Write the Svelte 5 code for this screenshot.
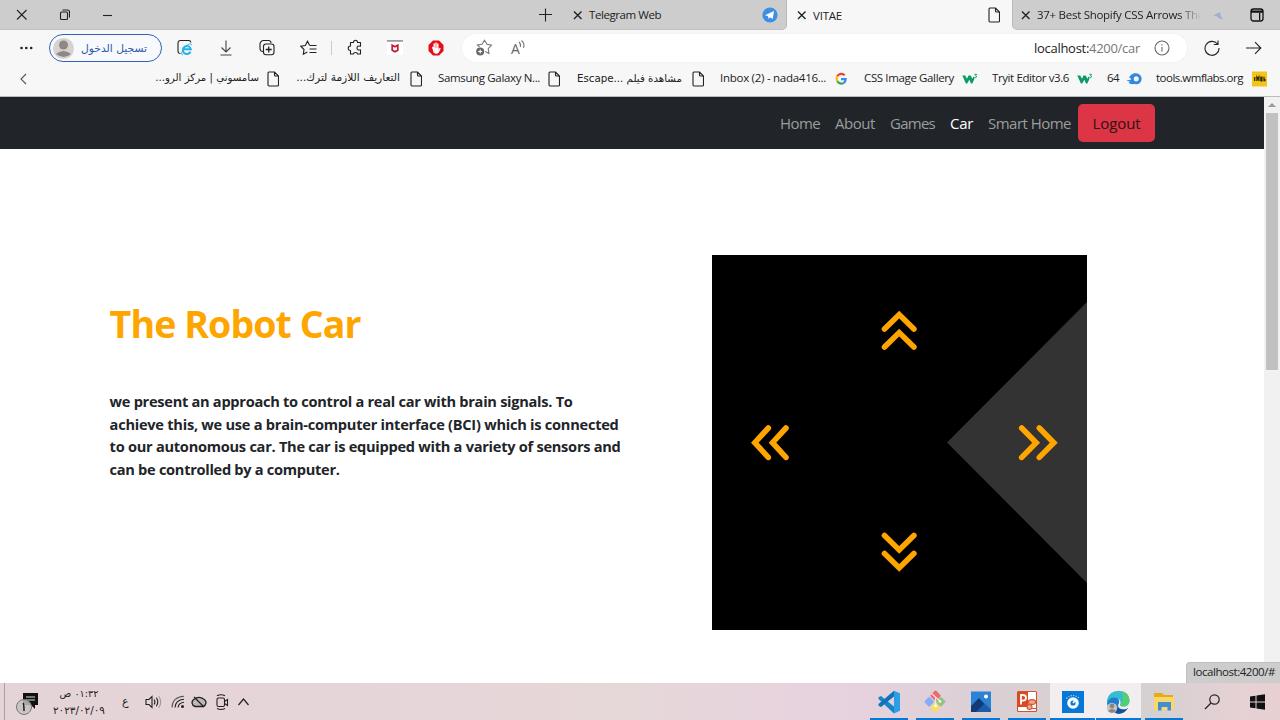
<script>
  // Letter-spacing (Latin) or font-size (joined scripts) is tuned so a label fills its slot.
  function fit(node, width) {
    const range = document.createRange();
    range.selectNodeContents(node);
    const natural = range.getBoundingClientRect().width;
    if (!natural || !width) return;
    if (/[\u0600-\u06ff]/.test(node.textContent)) {
      const size = parseFloat(getComputedStyle(node).fontSize);
      node.style.fontSize = (size * width) / natural + 'px';
    } else {
      node.style.letterSpacing = (width - natural) / node.textContent.length + 'px';
    }
  }

  const windowRow = [
    { icon: 'close', gap: 16, w: 11 },
    { icon: 'restore', gap: 32, w: 11 },
    { icon: 'minimise', gap: 32, w: 11 },
    { icon: 'plus', gap: 426, w: 13 },
    { icon: 'x', gap: 21, w: 9 },
    { text: 'Telegram Web', gap: 7, w: 72 },
    { icon: 'telegram', gap: 101, w: 16 }
  ];
  const toolbar = [
    { icon: 'download', gap: 26, w: 14 },
    { icon: 'collections', gap: 26, w: 16 },
    { icon: 'favourites', gap: 25, w: 17 },
    { icon: 'divider', gap: 14, w: 2 },
    { icon: 'puzzle', gap: 14, w: 15 },
    { icon: 'shield', gap: 25, w: 16 },
    { icon: 'hand', gap: 25, w: 16 }
  ];
  const bookmarks = [
    { icon: 'back', gap: 19, w: 8 },
    { text: 'سامسوني | مركز الرو...', gap: 128, w: 104, rtl: true },
    { icon: 'doc', gap: 8, w: 12 },
    { text: 'التعاريف اللازمة لترك...', gap: 17, w: 104, rtl: true },
    { icon: 'doc', gap: 10, w: 12 },
    { text: 'Samsung Galaxy N...', gap: 16, w: 102 },
    { icon: 'doc', gap: 8, w: 12 },
    { text: 'مشاهدة فيلم Escape...\u200e', gap: 17, w: 105, rtl: true },
    { icon: 'doc', gap: 10, w: 12 },
    { text: 'Inbox (2) - nada416...', gap: 16, w: 106 },
    { icon: 'google', gap: 9, w: 12 },
    { text: 'CSS Image Gallery', gap: 17, w: 90 },
    { icon: 'w3', gap: 8, w: 16 },
    { text: 'Tryit Editor v3.6', gap: 14, w: 77 },
    { icon: 'w3', gap: 8, w: 16 },
    { text: '64', gap: 14, w: 12 },
    { icon: 'comet', gap: 7, w: 16 },
    { text: 'tools.wmflabs.org', gap: 14, w: 87 },
    { icon: 'imdb', gap: 9, w: 15 }
  ];
  const links = [
    { text: 'Home', w: 40 },
    { text: 'About', w: 40 },
    { text: 'Games', w: 45 },
    { text: 'Car', w: 23, active: true },
    { text: 'Smart Home', w: 83 }
  ];
  const copy = [
    { text: 'we present an approach to control a real car with brain signals. To', w: 463 },
    { text: 'achieve this, we use a brain-computer interface (BCI) which is connected', w: 509 },
    { text: 'to our autonomous car. The car is equipped with a variety of sensors and', w: 511 },
    { text: 'can be controlled by a computer.', w: 230 }
  ];
  const tray = [
    { icon: 'speaker', gap: 17, w: 17 },
    { icon: 'wifi', gap: 9, w: 14 },
    { icon: 'cloud', gap: 5, w: 18 },
    { icon: 'camera', gap: 7, w: 14 },
    { icon: 'up', gap: 8, w: 13 }
  ];
  const apps = ['vscode', 'git', 'photos', 'powerpoint', 'disc', 'edge', 'folder'];
</script>

{#snippet icon(name, w)}
  <svg class="icon" width={w} height={w > 18 ? 24 : 18} viewBox="0 0 {w} {w > 18 ? 24 : 18}" fill="none" stroke="#222" stroke-width="1.1">
    {#if name === 'close'}
      <path d="M1 4l9.5 9.5M10.500 4L1 13.500" />
    {:else if name === 'restore'}
      <rect x="1.500" y="6" width="7" height="7.500" rx="1" /><path d="M3.500 4h5a2 2 0 0 1 2 2v5.500" />
    {:else if name === 'minimise'}
      <path d="M1 9.500h9" />
    {:else if name === 'plus'}
      <path d="M6.500 2.500v13M0 8.500h13" />
    {:else if name === 'x'}
      <path d="M1 5.500l7.500 7.500M8.500 5.500L1 13" stroke-width="1.400" />
    {:else if name === 'telegram'}
      <circle cx="8" cy="9" r="7.600" fill="#3c8fe3" stroke="none" /><path d="M3 9.200l9-4.200-1.300 8-2.700-1.700L6.700 13 6 10.300z" fill="#fff" stroke="none" />
    {:else if name === 'doc'}
      <path d="M1 3a1 1 0 0 1 1-1h5.500l4 4v9a1 1 0 0 1-1 1H2a1 1 0 0 1-1-1zM7.500 2v3a1 1 0 0 0 1 1h3" />
    {:else if name === 'bird'}
      <path d="M1 9.500L8 6l1.500 7L5.500 10.500z" fill="#a3b1c8" stroke="none" /><path d="M6 10.500l4.500 2.500" stroke="#8faad8" />
    {:else if name === 'tabs'}
      <rect x="1" y="3" width="12" height="12" rx="2.500" stroke="#111" stroke-width="1.300" /><path d="M1 4.500h12v2.300H1zM9 7h1.300v7H9z" fill="#111" stroke="none" />
    {:else if name === 'dots'}
      <g fill="#222" stroke="none"><circle cx="2.500" cy="9" r="1.300" /><circle cx="7.300" cy="9" r="1.300" /><circle cx="12.200" cy="9" r="1.300" /></g>
    {:else if name === 'ie'}
      <path d="M3.500 14.500A2.500 2.500 0 0 1 1 12V4a2.500 2.500 0 0 1 2.500-2.500h8A2.500 2.500 0 0 1 14 3.500" /><path d="M13.500 12.700A4 4 0 1 1 13.800 10.200H6.800" stroke="#22b4e8" stroke-width="2" /><path d="M6 15.600c-3 1-.8-5 2.500-8s6.500-4 5.700-1.200" stroke="#22b4e8" stroke-width=".9" />
    {:else if name === 'download'}
      <path d="M7 1.500v11M2.500 8.500L7 13l4.500-4.500M1.500 16h11" stroke="#444" />
    {:else if name === 'collections'}
      <path d="M4 12.500A3 3 0 0 1 1 10V5a3.500 3.500 0 0 1 3.500-3.500h5A2.500 2.500 0 0 1 12 4" /><rect x="4.500" y="5" width="10.500" height="10.800" rx="2.500" /><path d="M9.750 7.500v6M6.700 10.500h6" stroke-width="1.300" />
    {:else if name === 'favourites'}
      <path d="M9.700 6.500L7.500 2.200 5.300 6.500.8 7.200 4 10.500l-.7 4.800 4-2.200M10 6.500h6.500M9.500 10h7M9.500 13.500h7" />
    {:else if name === 'divider'}
      <path d="M.5 2v14" stroke="#ccc" />
    {:else if name === 'puzzle'}
      <path d="M3.500 3.500h3c0-3 4-3 4 0h3v3.700c-2.500-.7-3.500.4-3.500 1.800s1 2.500 3.500 1.800V15h-3c0-2-4-2-4 0h-3v-3.500c-3 0-3-4.500 0-4.500z" stroke-linejoin="round" />
    {:else if name === 'shield'}
      <rect y="1" width="16" height="15" fill="#fff" stroke="none" /><path d="M0 1.900h16" stroke="#9c9c9c" stroke-width="1.800" /><path d="M5.200 6.200l2.800 1.600 2.800-1.600v5L8 12.800l-2.800-1.600z" stroke="#c11b33" stroke-width="1.700" />
    {:else if name === 'hand'}
      <path d="M5 1.500h6l4.500 4.500v6L11 16.500H5L.5 12V6z" fill="#e20f1a" stroke="none" /><path d="M4.800 8.500L6.200 13q2.300 2 4 0L12 9.500M6.200 10V5M8 10V4M9.800 10V5" stroke="#fff" stroke-width="1.400" stroke-linecap="round" /><path d="M6 9h4.500v4.500H6.500z" fill="#fff" stroke="none" />
    {:else if name === 'staradd'}
      <path d="M3.500 8L1.500 6l4.500-.7L8.500 1.200 11 5.300l4.500.8-3.300 3.600.7 4.800-3.600-2" stroke="#777" /><circle cx="4.200" cy="12.500" r="4" fill="#666" stroke="none" /><path d="M4.200 10.500v4M2.200 12.500h4" stroke="#fff" />
    {:else if name === 'waves'}
      <path d="M9 3q2.200 2 1.300 5M11.500 1.500q3.500 3 2 7.500" stroke="#777" />
    {:else if name === 'info'}
      <circle cx="8" cy="9" r="7" stroke="#666" /><path d="M8 8v4.500M8 5.200v1.300" stroke="#666" />
    {:else if name === 'refresh'}
      <path d="M13.500 5A7 7 0 1 0 15 9M14 1.500V5.500h-4.200" />
    {:else if name === 'forward'}
      <path d="M0 9h14.500M9 3.200L14.800 9 9 14.800" />
    {:else if name === 'back'}
      <path d="M7 4L2 9l5 5" stroke="#555" />
    {:else if name === 'google'}
      <g stroke-width="2.200"><path d="M9.700 5.200A4.600 4.600 0 0 0 2.300 6.300" stroke="#e84335" /><path d="M2.300 6.300a5 5 0 0 0 0 5" stroke="#fbbc05" /><path d="M2.300 11.300a4.600 4.600 0 0 0 6.500 1.500" stroke="#34a853" /><path d="M8.800 12.800a4.500 4.500 0 0 0 1.900-3.700H6" stroke="#4285f4" /></g>
    {:else if name === 'w3'}
      <path d="M.3 5.500h2.900l1.800 3.200 1.500-3.200h2.200l1.600 3.200 1.100-2h.9v2.600L10.300 13.500H9L7.300 9.800 5.200 13.500H3.900z" fill="#0a9c62" stroke="none" /><path d="M12.300 4.300h2.400l-1.300 1.500q1.800.2.900 1.500-.8.800-1.900.1" stroke="#0a9c62" stroke-width=".9" />
    {:else if name === 'comet'}
      <circle cx="10.200" cy="8.800" r="4" stroke="#3389e0" stroke-width="2.900" /><path d="M3 7.500Q6 3 10 3.400L7.500 8.500Q5 8.800 3 7.500zM.3 9.800q4 .8 6.900-1L9 13.800Q4 15 2.500 12.200l2-.4Q1.500 11.500.3 9.800z" fill="#3389e0" stroke="none" />
    {:else if name === 'imdb'}
      <rect y="1.500" width="15" height="15" fill="#f3c51b" stroke="none" /><path d="M2.700 7v4M4.900 11V7l1 1.500L6.900 7v4M8.900 7.200v3.600h1v-3.600zM12 6.700v4h.9V9" stroke="#332a00" stroke-width="1.300" />
    {:else if name === 'speaker'}
      <path d="M1 6.500h3L7 3.500v11l-3-3H1z" /><path d="M9 6.500q2 2.500 0 5M11.300 4.800q3 4.200 0 8.400" /><path d="M13.700 3.300q4 5.700 0 11.400" stroke="#999" />
    {:else if name === 'wifi'}
      <g stroke="#555" stroke-width="1.100"><path d="M1 14.500Q1.500 4 13 3.300" /><path d="M4 14.500Q4.500 7 13 6.300M7 14.500Q7.500 10 13 9.300" stroke="#222" /></g><circle cx="11.500" cy="13.500" r="1.500" fill="#222" stroke="none" />
    {:else if name === 'cloud'}
      <path d="M5 13.500a4 4 0 0 1-1-7.300Q9 2.500 14 6.200a4 4 0 0 1-1 7.300z" fill="#bdb7b8" stroke-width="1.300" /><path d="M4 4l10 10" stroke-width="1.300" />
    {:else if name === 'camera'}
      <rect x="2" y="5" width="7.500" height="8.500" rx="1.500" /><path d="M9.500 8.500l3-2v6l-3-2M2 2.700q4-2 8 0M2 15.500q4 2 8 0" />
    {:else if name === 'up'}
      <path d="M1.500 12l5-6 5 6" stroke-width="1.200" />
    {:else if name === 'vscode'}
      <path d="M1.500 7.300L4 6l13 10.500V23.500L1.500 9z" fill="#1686cc" stroke="none" /><path d="M1.500 15.700L4 17 17 6.500V.8L1.500 14z" fill="#1073b5" stroke="none" /><path d="M17 .8L23 3.300v17.400l-6 2.800z" fill="#2a9fe5" stroke="none" />
    {:else if name === 'git'}
      <g stroke="none"><rect x="8.500" y="1.700" width="8" height="8" rx="1.500" transform="rotate(45 12.500 5.700)" fill="#ef6a6c" /><rect x="2.500" y="8" width="7.500" height="7.500" rx="1.500" transform="rotate(45 6.200 11.700)" fill="#86adf8" /><rect x="14" y="8" width="7.500" height="7.500" rx="1.500" transform="rotate(45 17.700 11.700)" fill="#93c47f" /><rect x="8.200" y="13.500" width="8" height="8" rx="1.500" transform="rotate(45 12.200 17.500)" fill="#f7da70" /></g><path d="M8.500 3.500l9 8M12.500 7.500v8" stroke="#f3e4e6" stroke-width="1.200" /><circle cx="12.500" cy="16" r="1.400" fill="#fff" stroke="none" /><circle cx="17" cy="11.500" r="1.300" fill="#fff" stroke="none" />
    {:else if name === 'photos'}
      <path d="M2 1.500h20V22H2z" fill="#2c83d6" stroke="none" /><path d="M2 16l8-8 12 13v1H2z" fill="#123a78" stroke="none" /><path d="M10 19l5.500-5.500L22 19.500V22H7z" fill="#1c5ca8" stroke="none" /><circle cx="17" cy="6.500" r="2" fill="#fff" stroke="none" />
    {:else if name === 'powerpoint'}
      <rect x="2.500" y="1.500" width="19" height="20" rx="1" fill="#fff" stroke="#d35230" /><path d="M2.500 2h10.500v15H2.500z" fill="#d84a20" stroke="none" /><path d="M6 14.500V5h2q3 0 3 2.800t-3 2.800H6" stroke="#fff" stroke-width="1.800" /><ellipse cx="17" cy="12" rx="3.600" ry="2.400" fill="#f4a78e" stroke="#d35230" /><circle cx="14.500" cy="17" r="2.500" fill="#f4a78e" stroke="#d35230" /><path d="M17 18.500h4" stroke="#d35230" />
    {:else if name === 'disc'}
      <path d="M1 1h22v22H1z" fill="#0878d8" stroke="none" /><circle cx="12" cy="13" r="4.200" stroke="#fff" stroke-width="3.200" /><path d="M12 13l3.500-4" stroke="#fff" stroke-width="1.800" /><path d="M5.500 8.500Q12 2.500 18.500 8.500" stroke="#cfe8ff" stroke-dasharray="1 1.500" />
    {:else if name === 'edge'}
      <g stroke="none"><path d="M1 10Q3 1 12.500.8 23.500 1.500 23.500 10.500q0 6-6.500 6-4 0-2.500-3 .8-5-5.500-5Q3 8.500 1 13z" fill="#35bdd0" /><path d="M15 1.200q8.500 2 8.500 9.300 0 6-6.500 6-3.500 0-2.700-2.500 5-3 .7-12.800z" fill="#55cd70" /><path d="M1 13Q3 7 9 7.500q5 .5 4 5.500-3 5 4 6.500 3 .3 5-1.500-4 6.500-11 5.500Q1 22 1 13z" fill="#1b7fd3" /><path d="M8.500 12q-.5 6.500 8.500 7.500 3 .3 5-1.500-4 6.500-11 5.500Q4 20 8.500 12z" fill="#164f9c" /><circle cx="6" cy="18" r="5.200" fill="#c8c4c1" /><circle cx="6" cy="16" r="2.400" fill="#8b8580" /><path d="M2 21q4-4.200 8 0-4 3.500-8 0z" fill="#8b8580" /></g>
    {:else if name === 'folder'}
      <g stroke="none"><path d="M2 3h8l2 2h9v4H2z" fill="#e9a91d" /><path d="M2 7h20v13H2z" fill="#fbd768" /><path d="M6 12h13v8.500h-3.500V17h-6v3.500H6z" fill="#3f8fd6" /></g>
    {:else if name === 'search'}
      <circle cx="10.500" cy="6.500" r="4.700" stroke-width="1.200" /><path d="M7 10L1 16" stroke-width="1.300" />
    {:else if name === 'windows'}
      <path d="M1 3.500l5.500-.8v5.800H1zM7.500 2.500L16 1.200v7.300H7.500zM1 9.500h5.500v5.800L1 14.500zM7.500 9.500H16v7.300l-8.500-1.300z" fill="#111" stroke="none" />
    {/if}
  </svg>
{/snippet}

{#snippet row(items)}
  {#each items as item}
    <span class="cell" class:rtl={item.rtl} style="width:{item.w}px;margin-left:{item.gap}px">
      {#if item.icon}{@render icon(item.icon, item.w)}{:else}<span class="label" use:fit={item.w}>{item.text}</span>{/if}
    </span>
  {/each}
{/snippet}

<div class="screen">
  <header class="tabs">
    <div class="inactive first">{@render row(windowRow)}</div>
    <div class="active">
      {@render row([{ icon: 'x', gap: 10, w: 9 }, { text: 'VITAE', gap: 7, w: 29 }, { icon: 'doc', gap: 146, w: 12 }])}
    </div>
    <div class="inactive last">
      <div class="faded">{@render row([{ icon: 'x', gap: 8, w: 9 }, { text: '37+ Best Shopify CSS Arrows The', gap: 7, w: 167 }])}</div>
      {@render row([{ icon: 'bird', gap: 7, w: 12 }, { icon: 'tabs', gap: 26, w: 14 }])}
    </div>
  </header>

  <div class="toolbar">
    <span class="menu">{@render icon('dots', 14)}</span>
    <button class="signin">
      <svg width="21" height="21" viewBox="0 0 21 21"><circle cx="10.500" cy="10.500" r="10.500" fill="#d6d2d0" /><circle cx="10.500" cy="7" r="4.500" fill="#8d8885" /><path d="M3 16q7.500-6 15 0-7 6-15 0z" fill="#8d8885" /></svg>
      <span class="cell rtl signtext"><span class="label" use:fit={66}>تسجيل الدخول</span></span>
    </button>
    <span class="ie">{@render icon('ie', 16)}</span>
    {@render row(toolbar)}
    <div class="address">
      {@render icon('staradd', 17)}
      <span class="read"><b>A</b>{@render icon('waves', 16)}</span>
      <span class="url"><span class="label" use:fit={106}>localhost:<i>4200/car</i></span></span>
      {@render icon('info', 16)}
    </div>
    <span class="refresh">{@render icon('refresh', 16)}</span>
    {@render icon('forward', 16)}
  </div>

  <div class="bookmarks">{@render row(bookmarks)}</div>

  <div class="viewport">
    <div class="page">
      <nav>
        {#each links as link}
          <a href="#top" class:current={link.active} style="width:{link.w}px"><span class="label" use:fit={link.w}>{link.text}</span></a>
        {/each}
        <button class="logout"><span class="label" use:fit={48}>Logout</span></button>
      </nav>
      <main>
        <section>
          <h1><span class="label" use:fit={251}>The Robot Car</span></h1>
          <p>
            {#each copy as line}<span class="line"><span class="label" use:fit={line.w}>{line.text}</span></span>{/each}
          </p>
        </section>
        <svg class="board" width="375" height="375" viewBox="712 255 375 375">
          <path d="M712 255h375v375H712z" fill="#000" />
          <path d="M947 442.500L1087 302v281z" fill="#333" />
          <g fill="none" stroke="orange" stroke-width="5.600" stroke-linecap="round">
            <path d="M884.500 329l14.700-14.400 14.700 14.400M884.500 347l14.700-14.400 14.700 14.400" />
            <path d="M884.500 535.500l14.700 14.400 14.700-14.400M884.500 553.500l14.700 14.400 14.700-14.400" />
            <path d="M768.300 428l-13.500 14.700 13.500 14.700M786 428l-13.500 14.700L786 457.400" />
            <path d="M1021.700 428l14.500 14.700-14.500 14.700M1039.300 428l14.500 14.700-14.500 14.700" />
          </g>
        </svg>
      </main>
    </div>
    <div class="scrollbar"><span class="arrow"></span><span class="thumb"></span></div>
    <div class="status"><span class="label" use:fit={82}>localhost:4200/#</span></div>
  </div>

  <footer>
    <div class="note">
      <svg width="26" height="28" viewBox="0 0 26 28"><path d="M8 4h15v12h-3v4l-4-4H8z" fill="#111" /><path d="M11 8h9M11 11h9" stroke="#ddd" /><circle cx="9" cy="18" r="7.500" fill="#c5bfc0" fill-opacity=".85" stroke="#777" /><path d="M8 14q1 1 1 8" stroke="#111" stroke-width="1.400" fill="none" /></svg>
    </div>
    <div class="clock">
      <span class="cell rtl time"><span class="label" use:fit={39}>٠١:٣٢ ص</span></span>
      <span class="cell date"><span class="label" use:fit={52}>٢٠٢٣/٠٢/٠٩</span></span>
    </div>
    <span class="language">ع</span>
    {@render row(tray)}
    <div class="apps">
      {#each apps as app}
        <span class="app" class:lit={app === 'disc' || app === 'edge'}>{@render icon(app, 24)}</span>
      {/each}
    </div>
    <span class="search">{@render icon('search', 17)}</span>
    {@render icon('windows', 17)}
  </footer>
</div>

<style>
  :global(body) { margin: 0; overflow: hidden; }
  .screen { width: 1280px; height: 720px; display: flex; flex-direction: column; overflow: hidden; background: #fff; font: 11.5px "Open Sans", "DejaVu Sans", sans-serif; color: #222; }
  .screen * { box-sizing: border-box; }
  .icon { display: block; flex: none; }
  .cell { display: flex; flex: none; align-items: center; white-space: nowrap; }
  .label { white-space: nowrap; }
  .rtl { direction: rtl; font-family: "DejaVu Sans", sans-serif; }
  button { font: inherit; padding: 0; }

  .tabs { display: flex; height: 30px; flex: none; background: #f7f7f7; }
  .tabs > div { display: flex; align-items: center; }
  .inactive { background: #cdcdcd; border-bottom: 1px solid #c0c0c0; }
  .first { width: 787px; border-radius: 0 0 5px 0; border-right: 1px solid #bababa; }
  .active { width: 225px; }
  .last { width: 268px; border-radius: 0 0 0 5px; border-left: 1px solid #bababa; }
  .faded { display: flex; flex: none; width: 192px; overflow: hidden; mask-image: linear-gradient(90deg, #000 86%, transparent 98%); }

  .toolbar { display: flex; height: 35px; flex: none; align-items: center; background: #f7f7f7; padding: 1px 18px 0 19px; }
  .signin { display: flex; align-items: center; width: 113px; height: 28px; margin: 0 15px 0 16px; padding-left: 3px; gap: 7px; border: 1px solid #3161b8; border-radius: 14px; background: #f8f9fc; color: #2d58a8; }
  .signtext { width: 66px; }
  .address { display: flex; flex: none; align-items: center; width: 725px; height: 28px; margin: 0 17px 0 18px; padding: 0 17px 0 14px; border-radius: 14px; background: #fff; box-shadow: 0 0 2px #e8e8e8; }
  .read { display: flex; width: 20px; margin-left: 18px; align-items: center; color: #666; }
  .read b { font-size: 14px; font-weight: 400; margin-right: -10px; }
  .read :global(svg) { flex: none; }
  .url { width: 107px; margin-left: auto; margin-right: 13px; font-size: 13px; }
  .url i { font-style: normal; color: #777; }
  .refresh { margin-right: 26px; }

  .bookmarks { display: flex; align-items: center; height: 32px; flex: none; padding-bottom: 4px; background: #f7f7f7; border-bottom: 1px solid #b9bdbe; }
  .bookmarks .label { position: relative; top: -1px; }

  .viewport { position: relative; display: flex; height: 586px; flex: none; }
  .page { width: 1264px; }
  nav { display: flex; height: 52px; align-items: center; justify-content: flex-end; gap: 15px; padding-right: 109px; padding-bottom: 1px; background: #212529; font-size: 15px; }
  nav a { color: #9b9d9e; text-decoration: none; white-space: nowrap; }
  nav a.current { color: #fff; }
  .logout { width: 77px; height: 38px; margin: 1px 0 0 -8px; border: 0; border-radius: 5px; background: #dc3545; color: #2c1216; }
  main { display: flex; justify-content: space-between; padding: 106px 177px 0 109.6px; }
  section { padding-top: 45px; width: 530px; }
  h1 { margin: 0; font-size: 37.5px; line-height: 48px; font-weight: 700; color: orange; }
  p { margin: 42px 0 0; font-size: 14.6px; line-height: 22.5px; font-weight: 700; color: #212529; }
  .line { display: block; }
  .board { display: block; flex: none; }
  .scrollbar { width: 16px; display: flex; flex-direction: column; align-items: center; background: #f1f1f1; }
  .arrow { margin-top: 6px; border: 4px solid transparent; border-top: 0; border-bottom: 4px solid #999; }
  .thumb { width: 12px; height: 257px; margin-top: 6px; background: #c1c1c1; }
  .status { position: absolute; right: 0; bottom: 0; width: 94px; height: 21px; padding: 1px 0 0 6px; border-radius: 4px 0 0; background: #cdcdcd; border: solid #bfbfbf; border-width: 1px 0 0 1px; color: #222; }

  footer { display: flex; align-items: center; height: 37px; flex: none; background: linear-gradient(90deg, #e4d4d7 0, #e6d5d8 25%, #e6d7d9 50%, #e7d2df 66%, #d9d0d4 78%, #d5d0d1 90%, #e6d1d4 97%, #e8cfd2); }
  .note { margin-left: 4px; padding-left: 10px; border-left: 1px solid #a89fa1; width: 49px; height: 37px; padding-top: 6px; }
  .clock { display: flex; flex-direction: column; align-items: center; width: 52px; gap: 0; line-height: 17px; font-family: "DejaVu Sans", sans-serif; }
  .time { width: 39px; height: 17px; }
  .date { width: 52px; height: 17px; }
  .date .label { direction: ltr; unicode-bidi: bidi-override; }
  .language { width: 6px; margin-left: 17px; font: 11px "DejaVu Sans", sans-serif; }
  .apps { display: flex; height: 37px; margin-left: auto; }
  .app { width: 45.800px; display: flex; justify-content: center; align-items: center; background: linear-gradient(#0878d4, #0878d4) center bottom / 38px 2px no-repeat; }
  .app.lit { background: linear-gradient(#0878d4, #0878d4) center bottom / 45px 2px no-repeat, #f2eeef; }
  .search { margin-left: 17px; margin-right: 28px; }
  footer > :global(svg:last-child) { margin-right: 14px; }
</style>
